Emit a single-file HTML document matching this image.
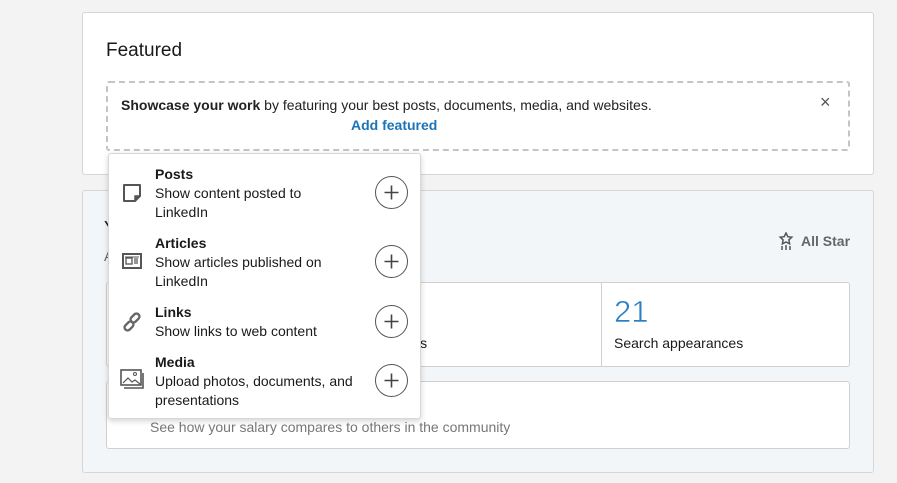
<!DOCTYPE html>
<html><head><style>
*{box-sizing:border-box;margin:0;padding:0}
body{width:897px;height:483px;background:#f3f3f3;font-family:"Liberation Sans",sans-serif;position:relative;overflow:hidden;color:rgba(0,0,0,.9)}
.abs{position:absolute}
.card1{left:82px;top:12px;width:792px;height:163px;background:#fff;border:1px solid #d6d6d6;border-radius:3px}
.card2{left:82px;top:190px;width:792px;height:283px;background:#f3f6f8;border:1px solid #d6d6d6;border-radius:3px}
.dash{left:106px;top:81px;width:744px;height:70px;border:2px dashed #c4c4c4;border-radius:3px}
.box{background:#fff;border:1px solid #d0d0d0;border-radius:3px}
.menu{left:108px;top:153px;width:313px;height:266px;background:#fff;border:1px solid #d8d8d8;border-radius:3px;box-shadow:0 2px 6px rgba(0,0,0,.18)}
.t{font-size:14px;line-height:19px}
.b{font-weight:bold}
.plus{width:33px;height:33px}
</style></head><body>
<div class="abs card1"></div>
<div class="abs" style="left:106px;top:40px;font-size:19px">Featured</div>
<div class="abs dash"></div>
<div class="abs t" style="left:121px;top:96px;font-size:14px;color:#222"><b>Showcase your work</b> by featuring your best posts, documents, media, and websites.</div>
<div class="abs t b" style="left:351px;top:116px;color:#1b74b8">Add featured</div>
<div class="abs" style="left:820px;top:92px;font-size:18px;color:#555">×</div>

<div class="abs card2"></div>
<div class="abs" style="left:104px;top:218px;font-size:18px">Y</div>
<div class="abs" style="left:104px;top:248px;font-size:14px;color:#666">A</div>
<svg class="abs" style="left:778px;top:232px" width="16" height="18" viewBox="0 0 16 18"><path d="M8 1l1.8 3.7 4 .5-2.9 2.7.7 4L8 10l-3.6 1.9.7-4L2.2 5.2l4-.5z" fill="none" stroke="#555" stroke-width="1.5"/><path d="M4 14v4M8 13v5M12 14v4" stroke="#555" stroke-width="1.5"/></svg>
<div class="abs t b" style="left:801px;top:232px;color:#666">All Star</div>
<div class="abs box" style="left:106px;top:282px;width:744px;height:85px"></div>
<div class="abs" style="left:601px;top:282px;width:1px;height:85px;background:#d0d0d0"></div>
<svg class="abs" style="left:612px;top:294px" width="40" height="32"><text x="2" y="28" font-family="Liberation Sans" font-size="31" fill="#2a7fc4" stroke="#fff" stroke-width="0.6">21</text></svg>
<div class="abs t" style="left:614px;top:334px">Search appearances</div>
<div class="abs t" style="left:410px;top:334px">ws</div>
<div class="abs box" style="left:106px;top:381px;width:744px;height:68px"></div>
<div class="abs t" style="left:150px;top:418px;color:#777">See how your salary compares to others in the community</div>

<div class="abs menu"></div>
<svg class="abs" style="left:122px;top:183px" width="20" height="20" viewBox="0 0 20 20"><path d="M2 2h16v11l-5 5H2z" fill="none" stroke="#555" stroke-width="2" stroke-linejoin="round"/><path d="M13 18v-5h5" fill="#555" stroke="#555" stroke-width="1.5"/></svg>
<div class="abs t" style="left:155px;top:165px"><b>Posts</b><br>Show content posted to<br>LinkedIn</div>
<svg class="abs plus" style="left:375px;top:176px" viewBox="0 0 33 33"><circle cx="16.5" cy="16.5" r="16" fill="none" stroke="#555"/><path d="M16.5 9.5v14M9.5 16.5h14" stroke="#444" stroke-width="1.6"/></svg>
<svg class="abs" style="left:122px;top:253px" width="20" height="17" viewBox="0 0 20 17"><rect x="1" y="1" width="18" height="14" fill="none" stroke="#555" stroke-width="2"/><rect x="4" y="5" width="6" height="6" fill="none" stroke="#555" stroke-width="1.3"/><path d="M12 6h4M12 8h4M12 10h4" stroke="#555" stroke-width="1.2"/><path d="M3 4h14" stroke="#555"/></svg>
<div class="abs t" style="left:155px;top:234px"><b>Articles</b><br>Show articles published on<br>LinkedIn</div>
<svg class="abs plus" style="left:375px;top:245px" viewBox="0 0 33 33"><circle cx="16.5" cy="16.5" r="16" fill="none" stroke="#555"/><path d="M16.5 9.5v14M9.5 16.5h14" stroke="#444" stroke-width="1.6"/></svg>
<svg class="abs" style="left:121px;top:311px" width="22" height="22" viewBox="0 0 22 22"><g fill="none" stroke="#666" stroke-width="2.4"><rect x="11" y="2" width="6" height="10" rx="3" transform="rotate(45 14 7)"/><rect x="5" y="10" width="6" height="10" rx="3" transform="rotate(45 8 15)"/></g></svg>
<div class="abs t" style="left:155px;top:303px"><b>Links</b><br>Show links to web content</div>
<svg class="abs plus" style="left:375px;top:305px" viewBox="0 0 33 33"><circle cx="16.5" cy="16.5" r="16" fill="none" stroke="#555"/><path d="M16.5 9.5v14M9.5 16.5h14" stroke="#444" stroke-width="1.6"/></svg>
<svg class="abs" style="left:120px;top:369px" width="25" height="22" viewBox="0 0 25 22"><rect x="1" y="1" width="20" height="15" fill="none" stroke="#555" stroke-width="1.6"/><path d="M3 14l5-5 4 4 3-2 5 4" fill="none" stroke="#555" stroke-width="1.2"/><circle cx="15" cy="5" r="1.5" fill="none" stroke="#555"/><path d="M4 19h19V4" fill="none" stroke="#555" stroke-width="1.6"/></svg>
<div class="abs t" style="left:155px;top:353px"><b>Media</b><br>Upload photos, documents, and<br>presentations</div>
<svg class="abs plus" style="left:375px;top:364px" viewBox="0 0 33 33"><circle cx="16.5" cy="16.5" r="16" fill="none" stroke="#555"/><path d="M16.5 9.5v14M9.5 16.5h14" stroke="#444" stroke-width="1.6"/></svg>
</body></html>
